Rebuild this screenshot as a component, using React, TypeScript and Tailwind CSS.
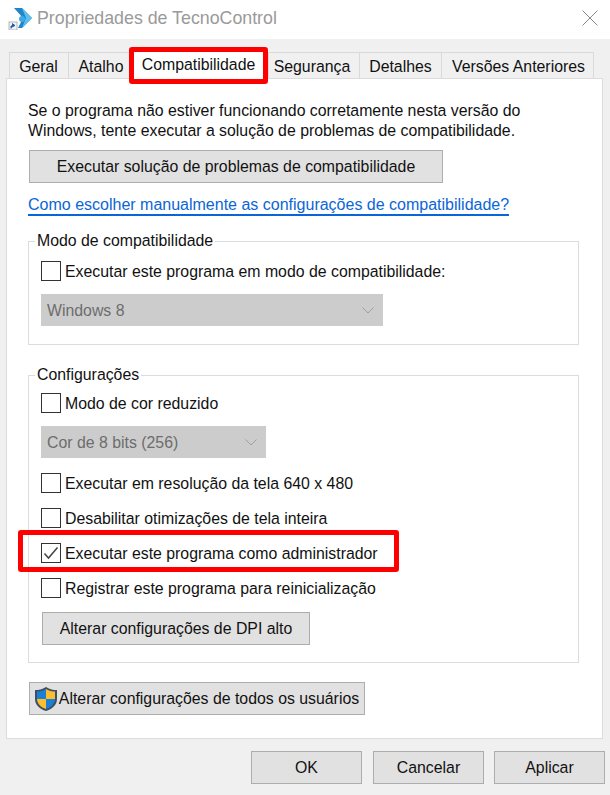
import React from "react";

const Btn = ({ className, children }: { className: string; children: React.ReactNode }) => (
  <button className={`flex h-[33px] items-center justify-center border border-[#adadad] bg-[#e1e1e1] text-[#111] ${className}`}>
    {children}
  </button>
);

const Check = ({ label, checked, className }: { label: string; checked?: boolean; className?: string }) => (
  <div className={`flex h-5 items-center ${className ?? ""}`}>
    <div className="flex h-5 w-5 shrink-0 items-center justify-center border border-[#333] bg-white">
      {checked && (
        <svg width="16" height="16" viewBox="0 0 16 16" fill="none" stroke="#444" strokeWidth="1.5">
          <path d="M1.5 8.5 L5.5 13 L14.5 2.5" />
        </svg>
      )}
    </div>
    <span className="ml-[4px] whitespace-nowrap pt-[1px]">{label}</span>
  </div>
);

const Combo = ({ label, className }: { label: string; className: string }) => (
  <div className={`flex h-[32px] items-center justify-between bg-[#cccccc] pl-[6px] pr-[9px] text-[#6d6d6d] ${className}`}>
    <span className="pt-[1px]">{label}</span>
    <svg width="12" height="7" viewBox="0 0 12 7" fill="none" stroke="#a0a0a0" strokeWidth="1">
      <path d="M0.5 0.5 L6 6 L11.5 0.5" />
    </svg>
  </div>
);

const Group = ({ title, className, children }: { title: string; className: string; children: React.ReactNode }) => (
  <div className={`relative ml-[-1px] w-[551px] border border-[#dcdcdc] pl-[12px] ${className}`}>
    <span className="absolute left-[6px] top-[-11px] bg-white px-[2px] leading-5 text-[#111]">{title}</span>
    {children}
  </div>
);

const Tab = ({ label, className }: { label: string; className: string }) => (
  <div className={`flex h-[27px] items-center justify-center border border-b-0 border-[#d9d9d9] bg-[#f0f0f0] pt-[2px] text-[#111] ${className}`}>
    {label}
  </div>
);

export default function App() {
  return (
    <div className="relative flex h-[795px] w-[610px] flex-col overflow-hidden bg-[#f0f0f0] text-[15.85px] leading-5 text-[#111]" style={{ fontFamily: '"Liberation Sans", Arial, sans-serif' }}>
      {/* title bar */}
      <div className="flex h-[39px] shrink-0 items-center bg-white pb-[4px] pl-[8px] pr-[12px]">
        <svg width="25" height="25" viewBox="0 0 25 25" className="shrink-0">
          <path d="M6 3 L14 3 L24 13 L14 23 L10 23 L15 13 Z" fill="#1f87c9" />
          <path d="M14 3 L24 13 L14 23 L18 13 Z" fill="#5cc0ee" />
          <circle cx="14" cy="14" r="3" fill="#3fa9e6" />
          <rect x="1" y="17" width="8" height="8" fill="#f4f4f4" stroke="#999" strokeWidth="0.7" />
          <path d="M3 23.5 L3 21 L5.5 20.5 M4 18.5 L7 20.5 L4 22" fill="#1b5fb8" stroke="#1b5fb8" strokeWidth="1" />
        </svg>
        <span className="ml-[4px] text-[17.8px] text-[#9a9a9a]">Propriedades de TecnoControl</span>
        <svg width="16" height="16" viewBox="0 0 16 16" className="ml-auto" fill="none" stroke="#8a8a8a" strokeWidth="1">
          <path d="M0.5 0.5 L15.5 15.5 M15.5 0.5 L0.5 15.5" />
        </svg>
      </div>

      {/* tabs */}
      <div className="ml-[9px] mt-[13px] flex h-[27px] shrink-0">
        <Tab label="Geral" className="w-[60px] pr-[1px]" />
        <Tab label="Atalho" className="ml-[-1px] w-[64px] pl-[2px]" />
        <div className="relative z-10 mb-[-2px] mt-[-2px] flex w-[136px] items-center justify-center bg-white pb-[2px] pr-[3px] text-[#111]">Compatibilidade</div>
        <Tab label="Segurança" className="w-[92px] pr-[4px]" />
        <Tab label="Detalhes" className="ml-[-1px] w-[83px]" />
        <Tab label="Versões Anteriores" className="ml-[-1px] w-[153px] pl-[2px]" />
      </div>

      {/* panel */}
      <div className="ml-[6px] mt-[-1px] h-[661px] w-[597px] shrink-0 border border-[#dcdcdc] bg-white pl-[22px] pt-[22px]">
        <p className="ml-[-1px] w-[560px] leading-5">
          Se o programa não estiver funcionando corretamente nesta versão do
          <br />
          Windows, tente executar a solução de problemas de compatibilidade.
        </p>
        <Btn className="mt-[9px] w-[414px]">Executar solução de problemas de compatibilidade</Btn>
        <a className="ml-[-1px] mt-[12px] block w-fit border-b-2 border-[#0a66d8] text-[16px] leading-[19px] text-[#0a66d8]">
          Como escolher manualmente as configurações de compatibilidade?
        </a>

        <Group title="Modo de compatibilidade" className="mt-[25px] h-[104px] pt-[19px]">
          <Check label="Executar este programa em modo de compatibilidade:" />
          <Combo label="Windows 8" className="mt-[13px] w-[342px]" />
        </Group>

        <Group title="Configurações" className="mt-[30px] h-[288px] pt-[17px]">
          <Check label="Modo de cor reduzido" />
          <Combo label="Cor de 8 bits (256)" className="mt-[13px] w-[225px]" />
          <Check label="Executar em resolução da tela 640 x 480" className="mt-[15px]" />
          <Check label="Desabilitar otimizações de tela inteira" className="mt-[15px]" />
          <Check label="Executar este programa como administrador" checked className="mt-[15px]" />
          <Check label="Registrar este programa para reinicialização" className="mt-[15px]" />
          <Btn className="ml-[1px] mt-[14px] w-[268px]">Alterar configurações de DPI alto</Btn>
        </Group>

        <Btn className="mt-[19px] w-[336px] pr-[2px]">
          <svg width="26" height="26" viewBox="0 0 26 26" className="shrink-0">
            <path d="M13 1 C9 3.5 6 4 2 4 L2 13 C2 19 7 23 13 25 C19 23 24 19 24 13 L24 4 C20 4 17 3.5 13 1 Z" fill="#3d4f63" />
            <path d="M13 3 C10 5 7 5.5 4 5.5 L4 13 L13 13 Z" fill="#1c7fd6" />
            <path d="M13 3 C16 5 19 5.5 22 5.5 L22 13 L13 13 Z" fill="#fbbf2e" />
            <path d="M4 13 C4.3 18 8 21.5 13 23 L13 13 Z" fill="#fbbf2e" />
            <path d="M22 13 C21.7 18 18 21.5 13 23 L13 13 Z" fill="#1c7fd6" />
          </svg>
          <span className="whitespace-nowrap">Alterar configurações de todos os usuários</span>
        </Btn>
      </div>

      {/* footer */}
      <div className="ml-[251px] mt-[12px] flex">
        <Btn className="w-[111px]">OK</Btn>
        <Btn className="ml-[11px] w-[111px]">Cancelar</Btn>
        <Btn className="ml-[10px] w-[111px]">Aplicar</Btn>
      </div>

      {/* red annotations */}
      <div className="absolute left-[129px] top-[47px] z-20 h-[37px] w-[139px] rounded-[3px] border-[5px] border-[#fe0000]" />
      <div className="absolute left-[18px] top-[530px] z-20 h-[42px] w-[381px] rounded-[3px] border-[5px] border-[#fe0000]" />
    </div>
  );
}
